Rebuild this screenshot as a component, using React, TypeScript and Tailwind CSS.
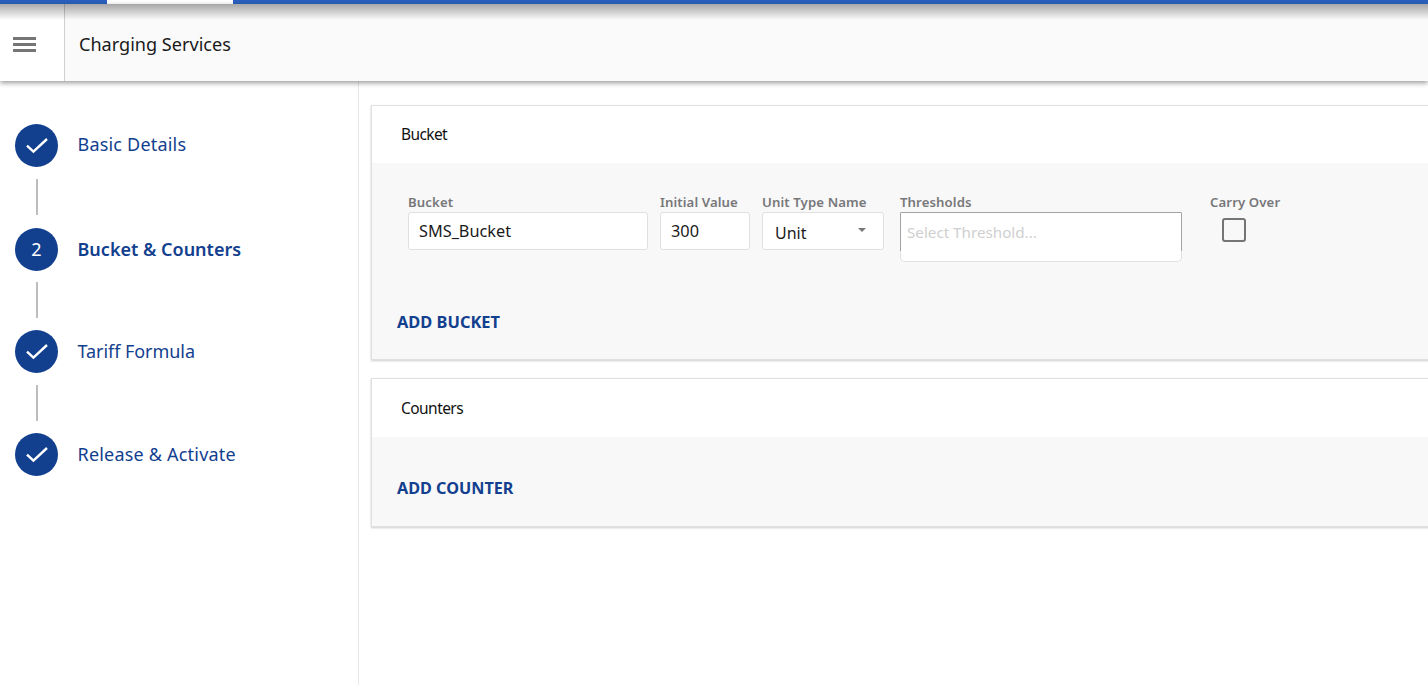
import React from 'react';

const font = "font-['Noto_Sans',sans-serif]";

const CheckIcon = () => (
  <svg width="24" height="24" viewBox="0 0 24 24" fill="none" stroke="#ffffff" strokeWidth="2.4">
    <path d="M2 12.6 L8.4 18.6 L22 6" />
  </svg>
);

const Step: React.FC<{ label: string; num?: string; textClass?: string }> = ({ label, num, textClass }) => (
  <div className="flex items-center h-[44px]">
    <div className="w-[43px] h-[43px] rounded-full bg-[#12408f] flex items-center justify-center text-white text-[18px] shrink-0">
      {num ? num : <CheckIcon />}
    </div>
    <span className={`ml-[20px] -translate-x-[0.5px] text-[18px] text-[#12408f] ${textClass}`}>{label}</span>
  </div>
);

const Connector: React.FC<{ mt: string; mb: string }> = ({ mt, mb }) => (
  <div className={`w-[2px] h-[36px] bg-[#bdbdbd] ml-[21px] ${mt} ${mb}`} />
);

const FieldLabel: React.FC<{ children: React.ReactNode }> = ({ children }) => (
  <div className="text-[13.2px] leading-[16px] tracking-[0.1px] font-semibold text-[#77777a] whitespace-nowrap">{children}</div>
);

export default function App() {
  return (
    <div className={`${font} w-[1428px] h-[685px] bg-white overflow-hidden flex flex-col`}>
      {/* top strip */}
      <div className="flex h-[4px] bg-[#2a60bd] shrink-0">
        <div className="w-[107px]" />
        <div className="w-[126px] bg-white" />
      </div>

      {/* header */}
      <header className="relative z-10 flex h-[77px] shrink-0 bg-[#fafafa] shadow-[0_2px_5px_rgba(0,0,0,0.4)]">
        <div className="w-[65px] bg-white border-r border-[#cfcfcf] flex items-center pl-[13px] pt-[4px]">
          <div className="w-[23px] flex flex-col gap-[3px]">
            <div className="h-[3px] bg-[#757575]" />
            <div className="h-[3px] bg-[#757575]" />
            <div className="h-[3px] bg-[#757575]" />
          </div>
        </div>
        <div className="pl-[14px] pt-[4px] flex items-center text-[18.1px] text-[#1a1a1a]">Charging Services</div>
        <div className="absolute left-0 right-0 top-0 h-[16px] bg-gradient-to-b from-[#00000055] to-transparent" />
      </header>

      <div className="flex flex-1 min-h-0">
        {/* stepper */}
        <aside className="w-[359px] shrink-0 border-r border-[#e8e8e8] pl-[15px] pt-[42px]">
          <Step label="Basic Details" textClass="tracking-[0.2px] -mt-[1px]" />
          <Connector mt="mt-[12px]" mb="mb-[12px]" />
          <Step label="Bucket & Counters" num="2" textClass="font-semibold" />
          <Connector mt="mt-[11px]" mb="mb-[11px]" />
          <Step label="Tariff Formula" textClass="tracking-[-0.05px]" />
          <Connector mt="mt-[12px]" mb="mb-[11px]" />
          <Step label="Release & Activate" textClass="tracking-[0.2px]" />
        </aside>

        {/* main */}
        <main className="flex-1 min-w-0 pl-[12px] pt-[24px]">
          <section className="w-[1100px] h-[255px] border border-[#e0e0e0] shadow-[0_1px_2px_rgba(0,0,0,0.2)] flex flex-col">
            <div className="h-[57px] bg-white flex items-center pl-[29px] pt-[1px] text-[15.5px] tracking-[-0.6px] text-[#111111]">Bucket</div>
            <div className="flex-1 bg-[#f8f8f8] pl-[36px] pt-[31px]">
              <div className="flex items-start h-[93px]">
                <div className="w-[240px]">
                  <FieldLabel>Bucket</FieldLabel>
                  <div className="mt-[2px] h-[38px] bg-white border border-[#e0e0e0] rounded-[3px] pl-[10px] flex items-center text-[16.3px] text-[#1a1a1a]">SMS_Bucket</div>
                </div>
                <div className="w-[90px] ml-[12px]">
                  <FieldLabel>Initial Value</FieldLabel>
                  <div className="mt-[2px] h-[38px] bg-white border border-[#e0e0e0] rounded-[3px] pl-[10px] flex items-center text-[16.3px] text-[#1a1a1a]">300</div>
                </div>
                <div className="w-[122px] ml-[12px]">
                  <FieldLabel>Unit Type Name</FieldLabel>
                  <div className="mt-[2px] h-[38px] bg-white border border-[#e0e0e0] rounded-[3px] pl-[12px] pr-[17px] flex items-center justify-between text-[16px] text-[#1a1a1a]">
                    <span className="pt-[3px]">Unit</span>
                    <span className="w-0 h-0 border-l-[4px] border-r-[4px] border-t-[4px] border-l-transparent border-r-transparent border-t-[#77777a] mb-[2px]" />
                  </div>
                </div>
                <div className="w-[282px] ml-[16px]">
                  <FieldLabel>Thresholds</FieldLabel>
                  <div className="mt-[2px] h-[50px] bg-white border border-[#e0e0e0] border-t-[#a3a3a3] rounded-b-[5px] relative pl-[6px] pt-[9px] text-[15.2px] leading-[20px] text-[#cfcfcf]">
                    Select Threshold...
                    <div className="absolute left-[-1px] right-[-1px] top-0 h-[38px] border-l border-r border-[#a3a3a3]" />
                  </div>
                </div>
                <div className="ml-[28px]">
                  <FieldLabel>Carry Over</FieldLabel>
                  <div className="mt-[8px] ml-[12px] w-[24px] h-[24px] border-2 border-[#757575] rounded-[3px]" />
                </div>
              </div>
              <div className="-ml-[11px] mt-[24px] text-[16.4px] leading-[22px] font-bold text-[#12408f]">ADD BUCKET</div>
            </div>
          </section>

          <section className="mt-[18px] w-[1100px] h-[149px] border border-[#e0e0e0] shadow-[0_1px_2px_rgba(0,0,0,0.2)] flex flex-col">
            <div className="h-[58px] bg-white flex items-center pl-[29px] pt-[2px] text-[15.5px] tracking-[-0.55px] text-[#111111]">Counters</div>
            <div className="flex-1 bg-[#f8f8f8] pl-[25px] pt-[40px]">
              <div className="text-[16.2px] leading-[22px] font-bold text-[#12408f]">ADD COUNTER</div>
            </div>
          </section>
        </main>
      </div>
    </div>
  );
}
